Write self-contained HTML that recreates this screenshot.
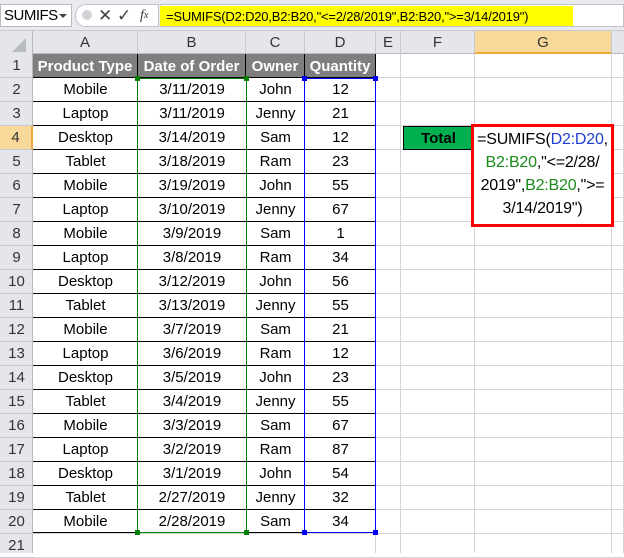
<!DOCTYPE html>
<html><head><style>
body{margin:0;width:624px;height:553px;background:#fff;font-family:"Liberation Sans",sans-serif;position:relative;overflow:hidden}
.a{position:absolute;box-sizing:border-box}
.c{position:absolute;box-sizing:border-box;display:flex;align-items:center;justify-content:center;font-size:15px;color:#000;white-space:nowrap}
</style></head><body>
<div class="a" style="left:0;top:0;width:624px;height:31px;background:#e8eaed;border-bottom:1px solid #c6c9ce"></div>
<div class="a" style="left:0;top:4px;width:72px;height:23px;background:#fff;border:1px solid #b8bcc2"></div>
<div class="c" style="left:4px;top:4px;height:23px;font-size:15px;letter-spacing:-0.5px">SUMIFS</div>
<div class="a" style="left:59px;top:14px;width:0;height:0;border-left:4px solid transparent;border-right:4px solid transparent;border-top:4px solid #444"></div>
<div class="a" style="left:75px;top:4px;width:84px;height:23px;background:#fff;border:1px solid #c0c4ca;border-radius:11px 0 0 11px"></div>
<div class="a" style="left:82px;top:10px;width:10px;height:10px;border-radius:50%;background:#d0d3d8"></div>
<div class="c" style="left:98px;top:4px;height:23px;font-size:17px;color:#444">✕</div>
<div class="c" style="left:117px;top:4px;height:23px;font-size:17px;color:#444">✓</div>
<div class="c" style="left:140px;top:4px;height:23px;font-size:14px;font-style:italic;font-family:'Liberation Serif',serif;color:#333">f<span style="font-size:10px">x</span></div>
<div class="a" style="left:160px;top:4px;width:464px;height:23px;background:#fff;border:1px solid #c0c4ca"></div>
<div class="a" style="left:160px;top:6px;width:413px;height:20px;background:#ffff00"></div>
<div class="c" style="left:166px;top:6px;height:20px;font-size:13px;letter-spacing:-0.2px">=SUMIFS(D2:D20,B2:B20,"&lt;=2/28/2019",B2:B20,"&gt;=3/14/2019")</div>
<div id="g"></div>
<div class="a" style="left:403px;top:126px;width:71px;height:24px;background:#00b050;border:1px solid #000"></div>
<div class="c" style="left:403px;top:126px;width:71px;height:24px;font-weight:bold">Total</div>
<div class="a" style="left:471px;top:124px;width:143px;height:103px;background:#fff;border:3px solid #ff0000"></div>
<div class="a" style="left:474px;top:128px;width:137px;text-align:center;font-size:16px;line-height:23px;letter-spacing:-0.2px">=SUMIFS(<span style="color:#1f3fd0">D2:D20</span>,<br><span style="color:#1a8a1a">B2:B20</span>,"&lt;=2/28/<br>2019",<span style="color:#1a8a1a">B2:B20</span>,"&gt;=<br>3/14/2019")</div>
<script>
var X=[0,33,138,246,305,376,401,475,612,624],L="ABCDEFG".split("");
var h="";
h+='<div class="a" style="left:0;top:31px;width:624px;height:23px;background:#e4e6ea;border-bottom:1px solid #b5b9bf"></div>';
h+='<div class="a" style="left:0;top:31px;width:33px;height:522px;background:#e4e6ea;border-right:1px solid #b5b9bf"></div>';
h+='<div class="a" style="left:475px;top:31px;width:137px;height:23px;background:#f9d99a;border-bottom:2px solid #f2a93b"></div>';
for(var i=0;i<7;i++){h+='<div class="c" style="left:'+X[i+1]+'px;top:31px;width:'+(X[i+2]-X[i+1])+'px;height:23px;color:#333;border-right:1px solid #c6c9ce">'+L[i]+'</div>';}
h+='<div class="a" style="left:12px;top:38px;width:0;height:0;border-left:14px solid transparent;border-bottom:14px solid #b8bcc2"></div>';
for(var i=0;i<21;i++){var y=54+i*24;
 h+='<div class="c" style="left:0;top:'+y+'px;width:33px;height:24px;color:#333;border-bottom:1px solid #c6c9ce;'+(i==3?'background:#f9d99a;border-right:2px solid #f2a93b;':'')+'">'+(i+1)+'</div>';
 h+='<div class="a" style="left:33px;top:'+(y+23)+'px;width:591px;height:1px;background:#d4d4d4"></div>';}
for(var i=4;i<9;i++){h+='<div class="a" style="left:'+(X[i+1]-1)+'px;top:54px;width:1px;height:499px;background:#d4d4d4"></div>';}
var D=[["Mobile","3/11/2019","John",12],["Laptop","3/11/2019","Jenny",21],["Desktop","3/14/2019","Sam",12],["Tablet","3/18/2019","Ram",23],["Mobile","3/19/2019","John",55],["Laptop","3/10/2019","Jenny",67],["Mobile","3/9/2019","Sam",1],["Laptop","3/8/2019","Ram",34],["Desktop","3/12/2019","John",56],["Tablet","3/13/2019","Jenny",55],["Mobile","3/7/2019","Sam",21],["Laptop","3/6/2019","Ram",12],["Desktop","3/5/2019","John",23],["Tablet","3/4/2019","Jenny",55],["Mobile","3/3/2019","Sam",67],["Laptop","3/2/2019","Ram",87],["Desktop","3/1/2019","John",54],["Tablet","2/27/2019","Jenny",32],["Mobile","2/28/2019","Sam",34]];
var H=["Product Type","Date of Order","Owner","Quantity"];
h+='<div class="a" style="left:33px;top:54px;width:343px;height:24px;background:#7f7f7f"></div>';
for(var j=0;j<4;j++){h+='<div class="c" style="left:'+X[j+1]+'px;top:54px;width:'+(X[j+2]-X[j+1])+'px;height:24px;color:#fff;font-weight:bold;border-right:1px solid #000">'+H[j]+'</div>';}
for(var r=0;r<19;r++){var y=78+r*24;
 h+='<div class="a" style="left:33px;top:'+(y-1)+'px;width:343px;height:1px;background:#000"></div>';
 for(var j=0;j<4;j++){h+='<div class="c" style="left:'+X[j+1]+'px;top:'+y+'px;width:'+(X[j+2]-X[j+1])+'px;height:23px">'+D[r][j]+'</div>';}}
h+='<div class="a" style="left:33px;top:532px;width:343px;height:1px;background:#000"></div>';
h+='<div class="a" style="left:137px;top:78px;width:110px;height:455px;border:1px solid #008000"></div>';
h+='<div class="a" style="left:304px;top:78px;width:72px;height:455px;border:1px solid #0000ff"></div>';
[[135,76,'#008000'],[244,76,'#008000'],[135,530,'#008000'],[244,530,'#008000'],[302,76,'#0000ff'],[373,76,'#0000ff'],[302,530,'#0000ff'],[373,530,'#0000ff']].forEach(function(p){h+='<div class="a" style="left:'+p[0]+'px;top:'+p[1]+'px;width:5px;height:5px;background:'+p[2]+'"></div>';});
document.getElementById("g").outerHTML=h;
</script>
</body></html>
